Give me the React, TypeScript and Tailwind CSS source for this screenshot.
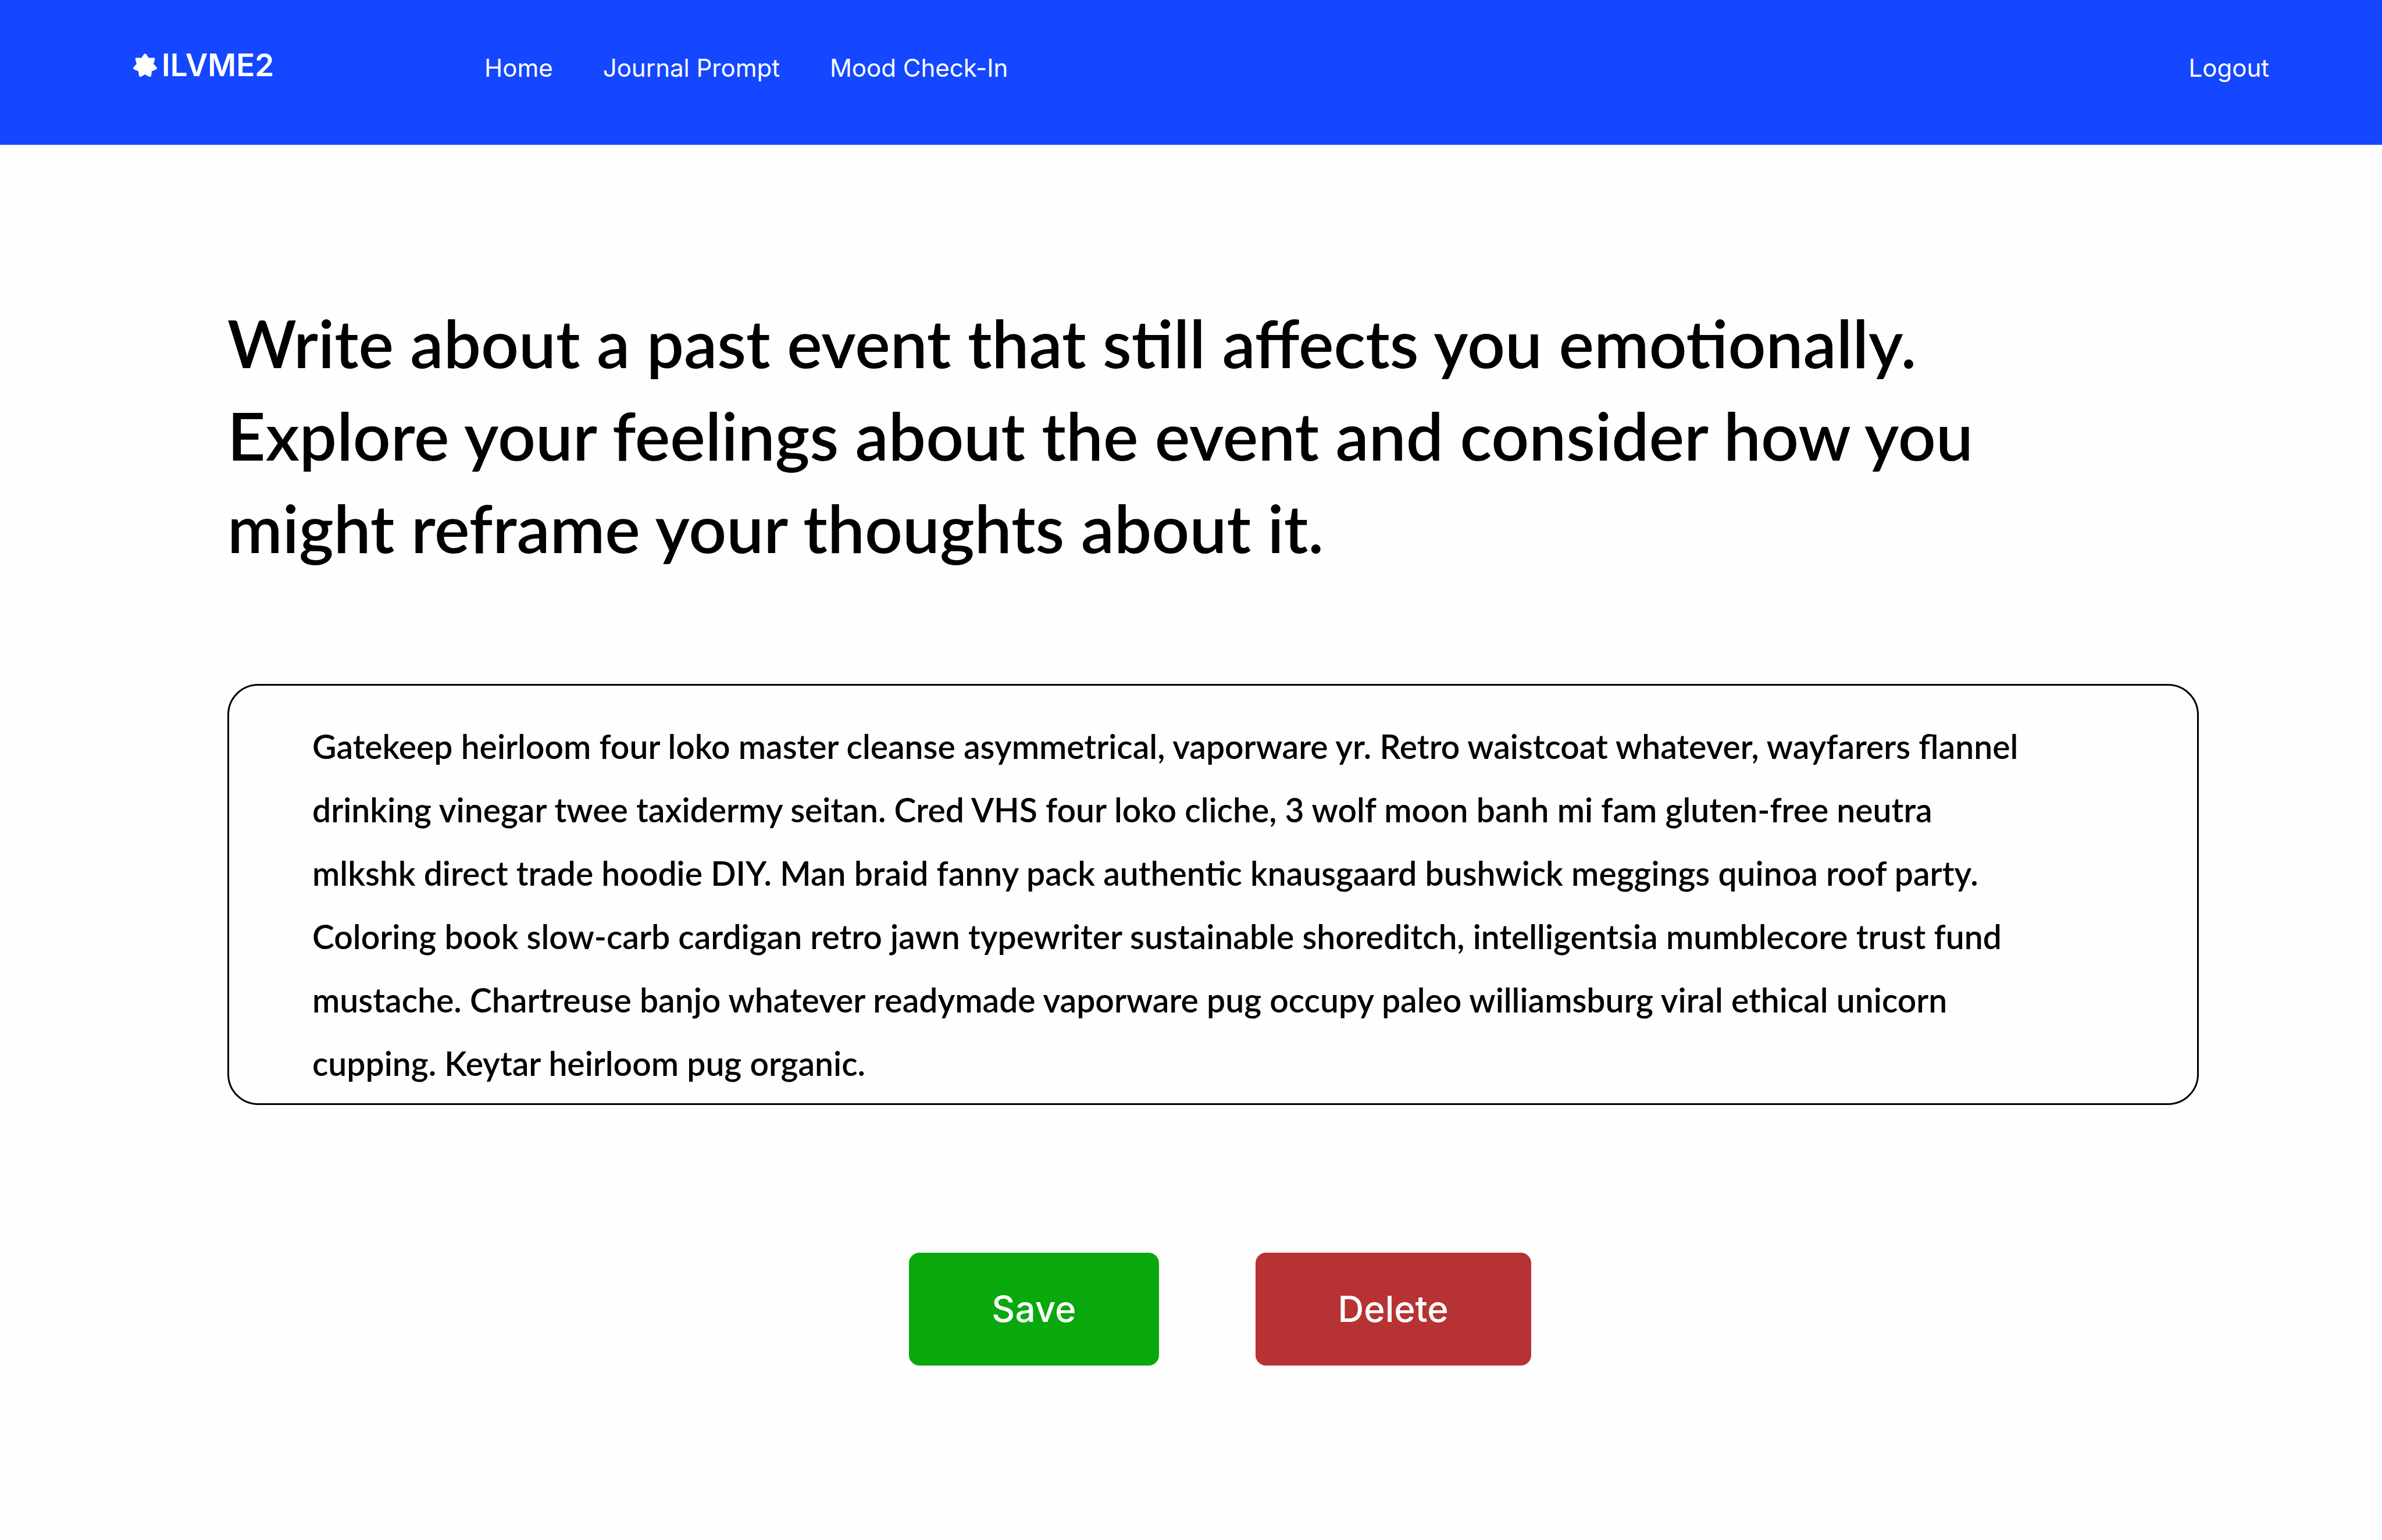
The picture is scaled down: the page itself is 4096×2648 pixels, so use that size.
import { useState } from "react";

const STAR_TIPS = 7;
const starPoints = Array.from({ length: STAR_TIPS * 2 }, (_, i) => {
  const radius = i % 2 === 0 ? 64 : 42;
  const angle = (Math.PI * i) / STAR_TIPS - Math.PI / 2;
  return `${(72 + radius * Math.cos(angle)).toFixed(1)},${(74 + radius * Math.sin(angle)).toFixed(1)}`;
}).join(" ");

const links = ["Home", "Journal Prompt", "Mood Check-In"];

const entry =
  "Gatekeep heirloom four loko master cleanse asymmetrical, vaporware yr. Retro waistcoat whatever, wayfarers flannel drinking vinegar twee taxidermy seitan. Cred VHS four loko cliche, 3 wolf moon banh mi fam gluten-free neutra mlkshk direct trade hoodie DIY. Man braid fanny pack authentic knausgaard bushwick meggings quinoa roof party. Coloring book slow-carb cardigan retro jawn typewriter sustainable shoreditch, intelligentsia mumblecore trust fund mustache. Chartreuse banjo whatever readymade vaporware pug occupy paleo williamsburg viral ethical unicorn cupping. Keytar heirloom pug organic.";

function Logo() {
  return (
    <a href="#" className="flex w-[604px] items-center gap-2 text-[53px] leading-[64px] font-semibold">
      <svg viewBox="0 0 144 144" className="size-[41px]" aria-hidden="true">
        <polygon points={starPoints} fill="currentColor" stroke="currentColor" strokeWidth="18" strokeLinejoin="round" />
      </svg>
      ILVME2
    </a>
  );
}

function Header() {
  return (
    <header className="flex items-start bg-[#1447ff] pt-20 pr-[194px] pb-[105px] pl-[229px] font-['Inter',sans-serif] text-white">
      <Logo />
      <nav className="flex flex-1 items-center gap-[86px] pt-[11px] text-[42px] leading-[52px]">
        {links.map((label) => (
          <a key={label} href="#">
            {label}
          </a>
        ))}
        <a href="#" className="ml-auto">
          Logout
        </a>
      </nav>
    </header>
  );
}

export default function App() {
  const [text, setText] = useState(entry);
  return (
    <div className="min-h-screen bg-[#fefefe]">
      <Header />
      <main className="flex flex-col pt-[260px] pr-[315px] pb-40 pl-[391px] font-['Lato',sans-serif] font-semibold text-black">
        <h1 id="prompt" className="max-w-[3200px] text-[114px] leading-[159px]">
          Write about a past event that still affects you emotionally. Explore your feelings about the event and
          consider how you might reframe your thoughts about it.
        </h1>
        <textarea
          aria-labelledby="prompt"
          rows={6}
          value={text}
          onChange={(e) => setText(e.target.value)}
          className="mt-[190px] block w-full resize-none overflow-hidden rounded-[53px] border-3 border-black bg-[#fffdfe] pt-[50px] pr-[290px] pb-[14px] pl-[143px] text-[57px] leading-[109px]"
        />
        <div className="mt-[254px] flex justify-center gap-[166px] pl-6 font-['Inter',sans-serif] text-[62px] leading-[74px] font-medium text-white">
          <button type="button" className="rounded-[18px] bg-[#09a80d] px-[142px] py-[60px]">
            Save
          </button>
          <button type="button" className="rounded-[18px] bg-[#b63233] px-[142px] py-[60px]">
            Delete
          </button>
        </div>
      </main>
    </div>
  );
}
